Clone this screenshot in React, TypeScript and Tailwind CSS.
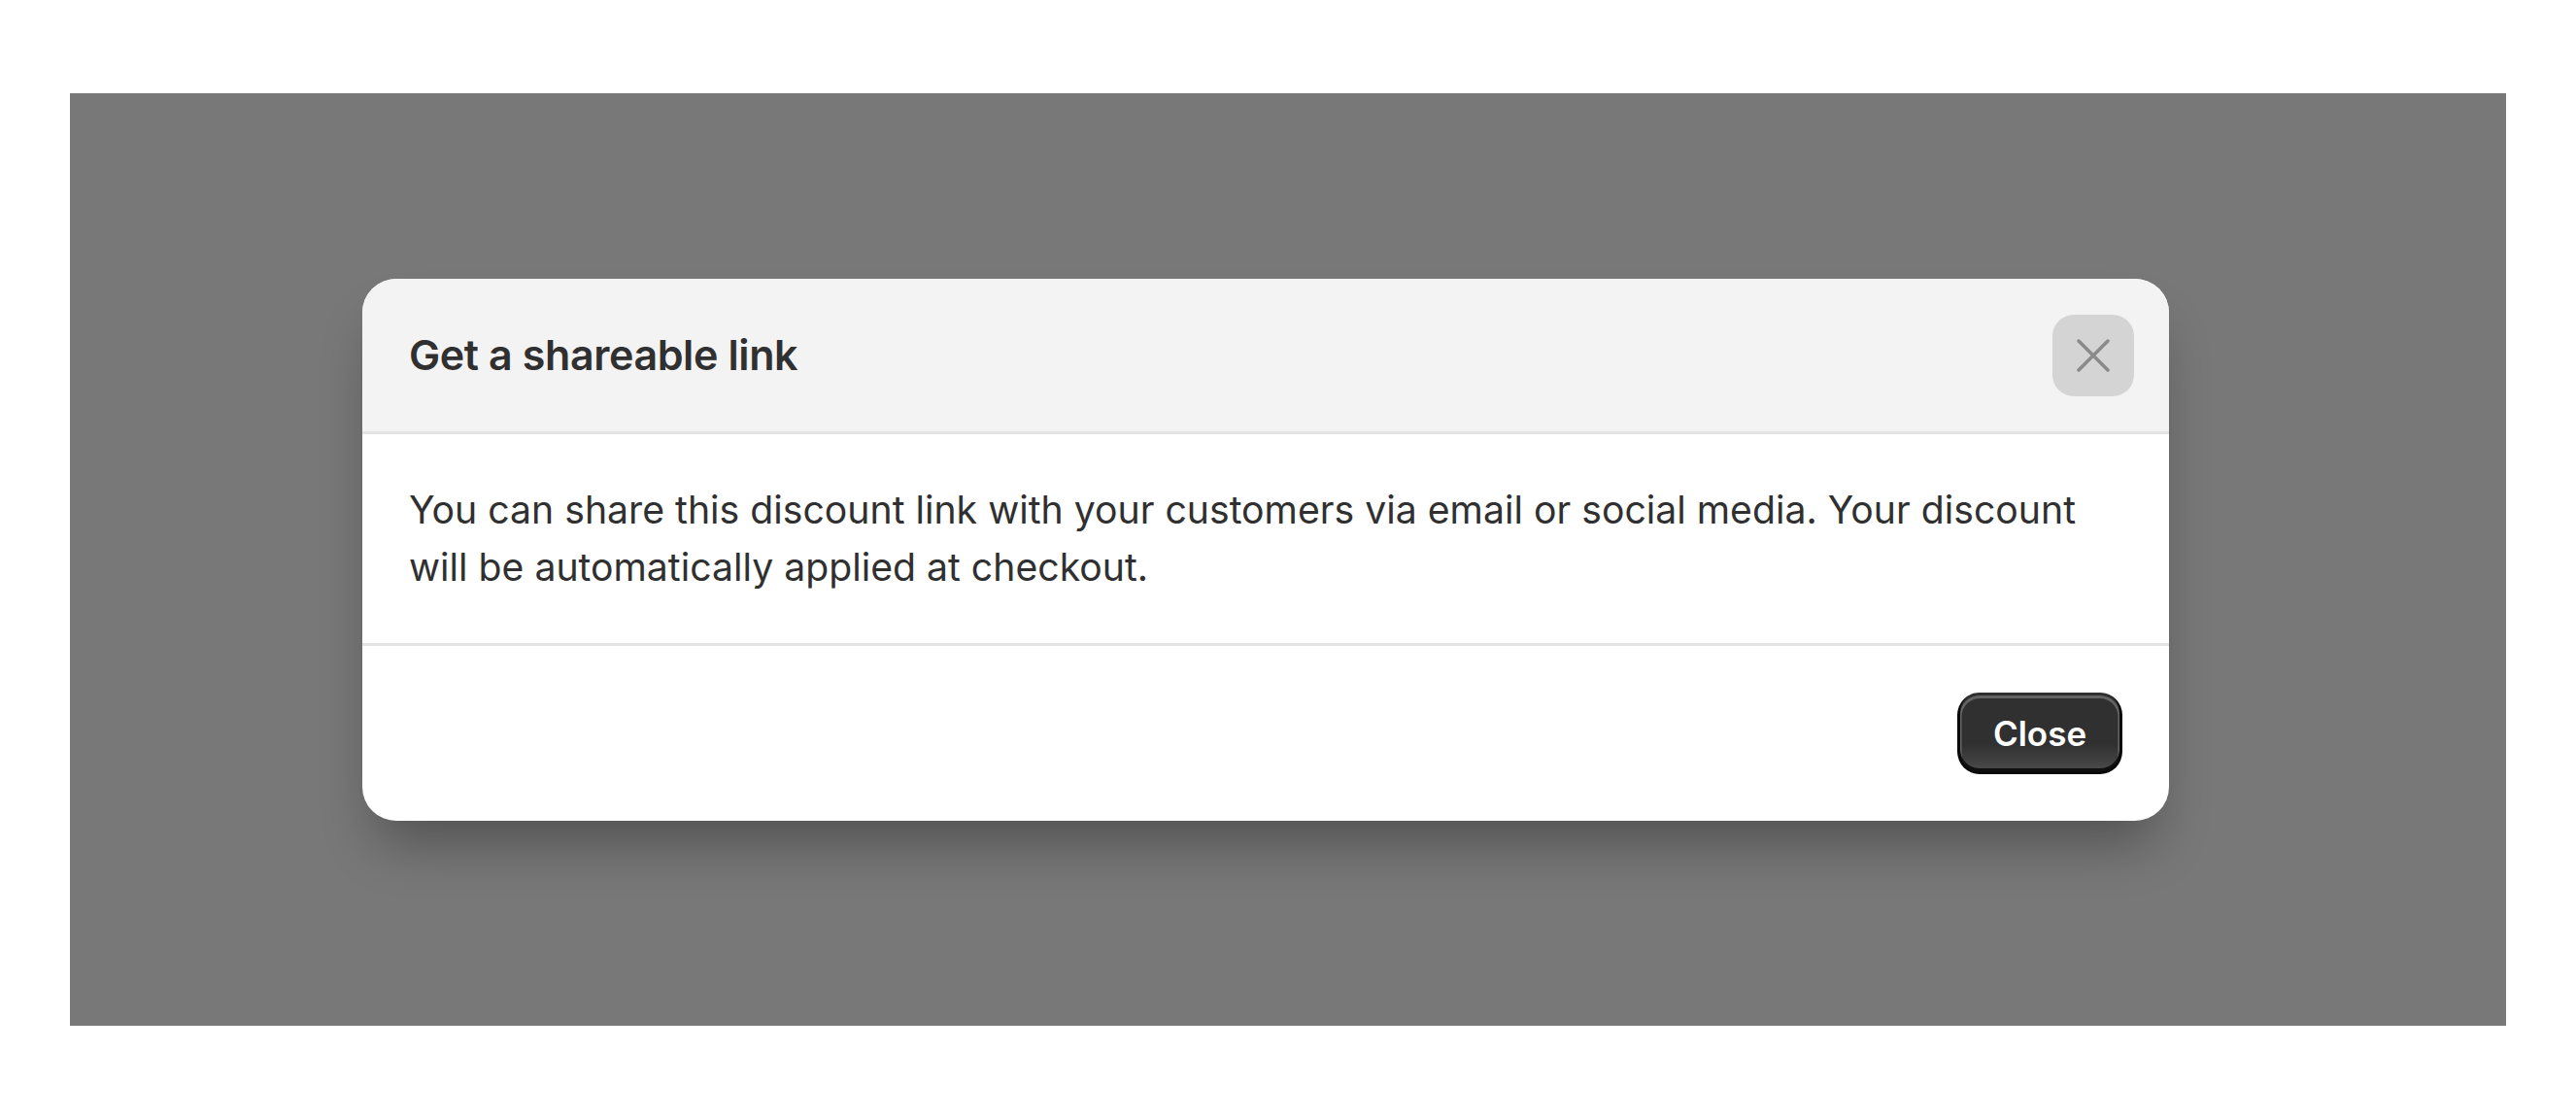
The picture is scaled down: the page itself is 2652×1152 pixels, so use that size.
import React from 'react';

const font = { fontFamily: 'Inter, "Noto Sans", sans-serif' };

const CloseIcon: React.FC = () => (
  <svg width="34" height="34" viewBox="0 0 34 34" fill="none">
    <path d="M2 2L32 32M32 2L2 32" stroke="#8a8a8a" strokeWidth="3.5" strokeLinecap="round" />
  </svg>
);

const App: React.FC = () => {
  return (
    <div className="w-[2652px] h-[1152px] bg-white pt-[96px] pl-[72px]" style={font}>
      <div className="w-[2508px] h-[960px] bg-[#787878] pt-[191px] pl-[301px]">
        <div className="w-[1860px] bg-white rounded-[35px] overflow-hidden shadow-[0_36px_56px_-14px_rgba(0,0,0,0.32)]">
          {/* header */}
          <div className="h-[160px] bg-[#f3f3f3] border-b-[3px] border-[#e3e3e3] flex items-center justify-between pl-[48px] pr-[36px]">
            <h2 className="text-[43px] leading-[60px] font-semibold tracking-[-0.4px] text-[#303030] -mt-[2px]">
              Get a shareable link
            </h2>
            <button className="w-[84px] h-[84px] rounded-[22px] bg-[#d4d4d4] flex items-center justify-center">
              <CloseIcon />
            </button>
          </div>

          {/* body */}
          <div className="pt-[48px] pb-[49px] px-[48px] border-b-[3px] border-[#e3e3e3]">
            <p className="text-[39.2px] leading-[59px] text-[#303030]">
              You can share this discount link with your customers via email or social media. Your discount will be
              automatically applied at checkout.
            </p>
          </div>

          {/* footer */}
          <div className="p-[48px] flex justify-end">
            <button className="w-[170px] h-[84px] rounded-[23px] text-white text-[35px] font-semibold flex items-center justify-center bg-[#303030] bg-[image:linear-gradient(180deg,rgba(48,48,48,0)_63%,rgba(255,255,255,0.15)_100%)] shadow-[inset_0_-3px_0_3px_rgba(0,0,0,0.8),inset_0_0_0_3px_#303030,inset_0_1.5px_0_4.5px_rgba(255,255,255,0.25)]">
              Close
            </button>
          </div>
        </div>
      </div>
    </div>
  );
};

export default App;
